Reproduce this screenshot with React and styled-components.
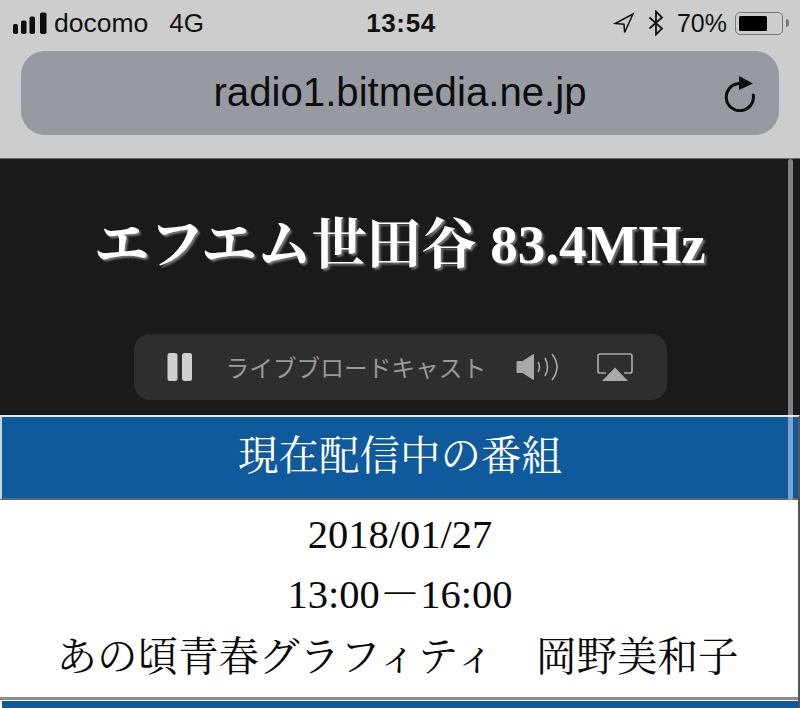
import React from 'react'
import styled, { createGlobalStyle } from 'styled-components'

const SERIF = `"Liberation Serif", "Noto Serif CJK JP", "Noto Sans CJK JP", serif`
const SANS = `"Liberation Sans", "Noto Sans", sans-serif`

const GlobalStyle = createGlobalStyle`
  html, body {
    margin: 0;
    padding: 0;
    background: #fff;
  }
`

const SignalBars = () => (
  <svg width="36" height="23" viewBox="0 0 36 23" fill="#0c0c0c">
    <rect x="0" y="12" width="5" height="10" rx="1.8" />
    <rect x="8" y="8.5" width="5.5" height="13.5" rx="1.8" />
    <rect x="16.5" y="4.5" width="5.5" height="17.5" rx="1.8" />
    <rect x="27" y="0.5" width="6.5" height="21.5" rx="1.8" />
  </svg>
)

const LocationIcon = () => (
  <svg width="22" height="22" viewBox="0 0 22 22" fill="none" stroke="#111" strokeWidth="1.5" strokeLinejoin="miter">
    <path d="M20 2 L2 11.5 L11 12.2 L11.6 20.5 Z" />
  </svg>
)

const BluetoothIcon = () => (
  <svg width="16" height="26" viewBox="0 0 16 26" fill="none" stroke="#111" strokeWidth="1.8">
    <path d="M1.5 7.5 L14 18.5 L8 24.5 V1.5 L14 7.5 L1.5 18.5" />
  </svg>
)

const ReloadIcon = () => (
  <svg width="34" height="38" viewBox="0 0 34 38" fill="none">
    <path d="M16 9.5 A13.6 13.6 0 1 0 30.3 21" stroke="#0c0c0c" strokeWidth="3" strokeLinecap="round" />
    <path d="M16 2 L30 9.5 L16 16 Z" fill="#0c0c0c" />
  </svg>
)

const PauseIcon = () => (
  <svg width="26" height="28" viewBox="0 0 26 28" fill="#cfcfcf">
    <rect x="0.5" y="0" width="10" height="28" rx="2.5" />
    <rect x="15" y="0" width="10" height="28" rx="2.5" />
  </svg>
)

const VolumeIcon = () => (
  <svg width="44" height="28" viewBox="0 0 44 28" fill="none">
    <path d="M1 8.5 H6.5 L17.5 1.5 V26.5 L6.5 19.5 H1 Z" fill="#a9a9a9" stroke="#a9a9a9" strokeLinejoin="round" />
    <path d="M22 9 Q25 14 22 19" stroke="#a9a9a9" strokeWidth="1.6" />
    <path d="M29 5 Q34 14 29 23" stroke="#a9a9a9" strokeWidth="1.6" />
    <path d="M36 1 Q46 14 36 27" stroke="#a9a9a9" strokeWidth="1.6" />
  </svg>
)

const AirPlayIcon = () => (
  <svg width="36" height="28" viewBox="0 0 36 28" fill="none">
    <path d="M9 20 H3 Q1 20 1 18 V3 Q1 1 3 1 H33 Q35 1 35 3 V18 Q35 20 33 20 H27" stroke="#a9a9a9" strokeWidth="1.7" />
    <path d="M18 14.5 L31 28 L5 28 Z" fill="#a9a9a9" />
  </svg>
)

const App = () => (
  <Page>
    <GlobalStyle />
    <BrowserChrome>
      <StatusBar>
        <StatusLeft>
          <SignalBars />
          <Carrier>docomo</Carrier>
          <Network>4G</Network>
        </StatusLeft>
        <Clock>13:54</Clock>
        <StatusRight>
          <LocationIcon />
          <BluetoothIcon />
          <Percent>70%</Percent>
          <Battery>
            <BatteryShell>
              <BatteryFill $level={70} />
            </BatteryShell>
            <BatteryCap />
          </Battery>
        </StatusRight>
      </StatusBar>
      <AddressBar>
        <AddressSpacer />
        <Address>radio1.bitmedia.ne.jp</Address>
        <ReloadSlot>
          <ReloadIcon />
        </ReloadSlot>
      </AddressBar>
    </BrowserChrome>

    <Content>
      <Hero>
        <StationTitle>エフエム世田谷 83.4MHz</StationTitle>
        <Player>
          <PlayerButton $width={26}>
            <PauseIcon />
          </PlayerButton>
          <PlayerLabel>ライブブロードキャスト</PlayerLabel>
          <PlayerButton $width={44}>
            <VolumeIcon />
          </PlayerButton>
          <AirPlayButton $width={36}>
            <AirPlayIcon />
          </AirPlayButton>
        </Player>
      </Hero>
      <ProgramTable>
        <TableHead>現在配信中の番組</TableHead>
        <TableBody>
          <ProgramLine>2018/01/27</ProgramLine>
          <ProgramLine>13:00－16:00</ProgramLine>
          <ProgramTitle>あの頃青春グラフィティ　岡野美和子</ProgramTitle>
        </TableBody>
        <NextHead />
      </ProgramTable>
      <ScrollThumb />
    </Content>
  </Page>
)

const Page = styled.div`
  width: 800px;
  height: 708px;
  overflow: hidden;
  display: flex;
  flex-direction: column;
`

const BrowserChrome = styled.header`
  height: 159px;
  flex: none;
  box-sizing: border-box;
  padding: 0 21px;
  background: #cdcdcd;
  border-bottom: 1px solid #6a6a6a;
`

const StatusBar = styled.div`
  height: 51px;
  box-sizing: border-box;
  padding-bottom: 5px;
  margin: 0 -10px 0 -8px;
  display: grid;
  grid-template-columns: 1fr auto 1fr;
  align-items: center;
  font-family: ${SANS};
  color: #111;
  font-size: 25px;
`

const StatusLeft = styled.div`
  display: flex;
  align-items: center;
`

const Carrier = styled.span`
  margin-left: 5px;
  font-size: 26.5px;
`

const Network = styled.span`
  margin-left: 21px;
  font-size: 26px;
`

const Clock = styled.span`
  font-size: 26px;
  font-weight: 700;
  letter-spacing: 0.6px;
`

const StatusRight = styled.div`
  display: flex;
  align-items: center;
  justify-content: flex-end;
  gap: 13px;
`

const Percent = styled.span`
  margin-left: 0;
`

const Battery = styled.div`
  display: flex;
  align-items: center;
  gap: 3px;
  margin-left: -5px;
`

const BatteryShell = styled.div`
  width: 48px;
  height: 23px;
  box-sizing: border-box;
  padding: 3px;
  border: 1.5px solid #777;
  border-radius: 5px;
`

const BatteryFill = styled.div`
  width: ${(p) => p.$level}%;
  height: 100%;
  background: #000;
  border-radius: 1.5px;
`

const BatteryCap = styled.div`
  width: 3px;
  height: 8px;
  background: #777;
  border-radius: 0 3px 3px 0;
`

const AddressBar = styled.div`
  height: 84px;
  display: grid;
  grid-template-columns: 62px 1fr 62px;
  align-items: center;
  background: #989aa2;
  border-radius: 24px;
`

const AddressSpacer = styled.div``

const Address = styled.div`
  text-align: center;
  font-family: ${SANS};
  font-size: 40.2px;
  color: #0d0d0f;
`

const ReloadSlot = styled.div`
  display: flex;
  align-items: center;
  justify-content: flex-start;
  margin-left: 6px;
`

const Content = styled.main`
  position: relative;
  flex: 1;
  display: flex;
  flex-direction: column;
  min-height: 0;
`

const Hero = styled.section`
  height: 256px;
  flex: none;
  box-sizing: border-box;
  padding-top: 54px;
  display: flex;
  flex-direction: column;
  align-items: center;
  background: #1a1a1a;
`

const StationTitle = styled.h1`
  margin: 0;
  height: 64px;
  line-height: 64px;
  font-family: ${SERIF};
  font-size: 55px;
  font-weight: 700;
  color: #fff;
  text-shadow: 2px 2px 2px #777;
  white-space: nowrap;
`

const Player = styled.div`
  margin-top: 57px;
  width: 533px;
  height: 66px;
  box-sizing: border-box;
  padding-left: 33px;
  display: flex;
  align-items: center;
  background: #2e2e2e;
  border-radius: 16px;
`

const PlayerButton = styled.div`
  width: ${(p) => p.$width}px;
  flex: none;
  display: flex;
  align-items: center;
  justify-content: center;
`

const AirPlayButton = styled(PlayerButton)`
  margin-left: 37px;
`

const PlayerLabel = styled.span`
  flex: none;
  width: 258px;
  margin: 0 32px 0 33px;
  font-family: "Noto Sans CJK JP", sans-serif;
  font-size: 23.7px;
  color: #9a9a9a;
  white-space: nowrap;
`

const ProgramTable = styled.section`
  flex: 1;
  min-height: 0;
  display: flex;
  flex-direction: column;
  background: #fff;
  border-top: 2px solid #e6e6e6;
  border-right: 2px solid #555;
  font-family: ${SERIF};
  text-align: center;
`

const TableHead = styled.h2`
  margin: 0;
  height: 83px;
  flex: none;
  line-height: 80px;
  box-sizing: border-box;
  font-size: 40.5px;
  font-weight: 400;
  color: #fff;
  background: #0f5a9c;
  border-left: 2px solid #c9d3dc;
  border-bottom: 2px solid #5f6670;
`

const TableBody = styled.div`
  height: 200px;
  flex: none;
  box-sizing: border-box;
  padding: 5px 0 0 2px;
  border-bottom: 3px solid #8c8c8c;
`

const ProgramLine = styled.div`
  height: 60px;
  line-height: 60px;
  font-size: 40.5px;
  color: #0a0a0a;
  white-space: nowrap;
`

const ProgramTitle = styled(ProgramLine)`
  padding: 3px 5px 0 0;
`

const NextHead = styled.div`
  flex: 1;
  margin-top: 1px;
  margin-left: 2px;
  background: #0f5a9c;
`

const ScrollThumb = styled.div`
  position: absolute;
  top: 0;
  right: 7px;
  width: 5px;
  height: 341px;
  background: rgba(255, 255, 255, 0.45);
  border-radius: 3px;
`

export default App
